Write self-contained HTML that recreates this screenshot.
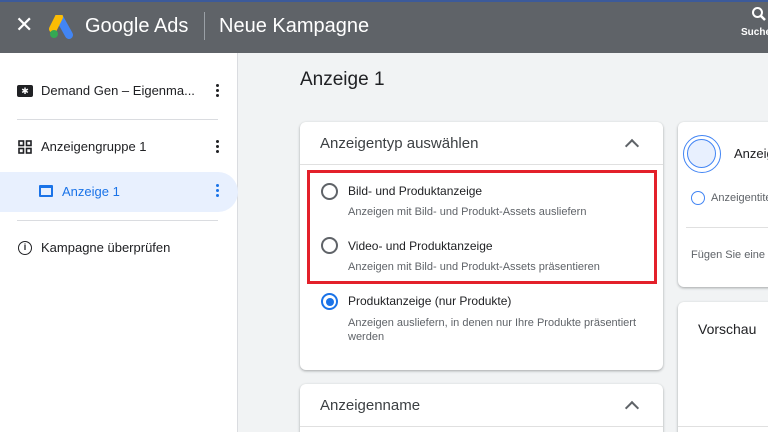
<!DOCTYPE html>
<html><head><meta charset="utf-8"><style>
*{margin:0;padding:0;box-sizing:border-box}
html,body{width:768px;height:432px;overflow:hidden}
body{font-family:"Liberation Sans",sans-serif;background:#f1f3f4;position:relative;color:#202124}
.abs{position:absolute}
.top{left:0;top:0;width:768px;height:53px;background:#5f6368;border-top:2px solid #3c5a9a}
.side{left:0;top:53px;width:238px;height:379px;background:#fff;border-right:1px solid #dadce0}
.t{position:absolute;white-space:nowrap}
.dots{position:absolute;width:3px}
.dots i{display:block;width:3px;height:3px;border-radius:50%;background:#202124;margin-bottom:2px}
.card{position:absolute;background:#fff;border-radius:6px;box-shadow:0 1px 2px rgba(60,64,67,.3),0 1px 3px rgba(60,64,67,.15)}
.radio{position:absolute;width:17px;height:17px;border:2px solid #5f6368;border-radius:50%}
.chev{position:absolute;width:10px;height:10px;border-left:2px solid #5f6368;border-top:2px solid #5f6368;transform:rotate(45deg)}
</style></head><body>
<div class="abs top">
 <div class="t" style="left:15px;top:10px;color:#fff;font-size:22px">✕</div>
 <svg class="abs" style="left:49px;top:13px" width="26" height="24" viewBox="0 0 26 24"><path d="M10 2 L20 20" stroke="#4285f4" stroke-width="8" stroke-linecap="round"/><path d="M10 2 L4 14" stroke="#fbbc04" stroke-width="8" stroke-linecap="round"/><circle cx="5" cy="19" r="4" fill="#34a853"/></svg>
 <div class="t" style="left:85px;top:13px;color:#fff;font-size:20px">Google Ads</div>
 <div class="abs" style="left:204px;top:10px;width:1px;height:28px;background:#9aa0a6"></div>
 <div class="t" style="left:219px;top:13px;color:#fff;font-size:20px">Neue Kampagne</div>
 <svg class="abs" style="left:751px;top:4px" width="16" height="16" viewBox="0 0 16 16"><circle cx="6.5" cy="6.5" r="4.5" stroke="#fff" stroke-width="2" fill="none"/><path d="M10 10 L14 14" stroke="#fff" stroke-width="2.5"/></svg>
 <div class="t" style="left:741px;top:25px;color:#fff;font-size:10px;font-weight:bold">Suche</div>
</div>
<div class="abs side">
 <div class="abs" style="left:17px;top:32px;width:16px;height:12px;background:#202124;border-radius:2px"><div style="color:#fff;font-size:9px;text-align:center;line-height:12px">✱</div></div>
 <div class="t" style="left:41px;top:30px;font-size:13px">Demand Gen – Eigenma...</div>
 <div class="dots" style="left:216px;top:31px"><i></i><i></i><i></i></div>
 <div class="abs" style="left:17px;top:66px;width:201px;height:1px;background:#dadce0"></div>
 <svg class="abs" style="left:18px;top:87px" width="14" height="14" viewBox="0 0 14 14" fill="none" stroke="#202124" stroke-width="1.6"><rect x="1" y="1" width="4.5" height="4.5"/><rect x="8.5" y="1" width="4.5" height="4.5"/><rect x="1" y="8.5" width="4.5" height="4.5"/><rect x="8.5" y="8.5" width="4.5" height="4.5"/></svg>
 <div class="t" style="left:41px;top:86px;font-size:13px">Anzeigengruppe 1</div>
 <div class="dots" style="left:216px;top:87px"><i></i><i></i><i></i></div>
 <div class="abs" style="left:0;top:119px;width:238px;height:40px;background:#e8f0fe;border-radius:0 20px 20px 0"></div>
 <div class="abs" style="left:39px;top:132px;width:14px;height:12px;border:2px solid #1a73e8;border-top-width:3px;border-radius:1px"></div>
 <div class="t" style="left:62px;top:131px;font-size:13px;color:#1a73e8">Anzeige 1</div>
 <div class="dots" style="left:216px;top:131px"><i style="background:#1a73e8"></i><i style="background:#1a73e8"></i><i style="background:#1a73e8"></i></div>
 <div class="abs" style="left:17px;top:167px;width:201px;height:1px;background:#dadce0"></div>
 <div class="abs" style="left:18px;top:188px;width:14px;height:14px;border:1.6px solid #202124;border-radius:50%;font-size:9px;font-weight:bold;text-align:center;line-height:11px">i</div>
 <div class="t" style="left:41px;top:187px;font-size:13px">Kampagne überprüfen</div>
</div>
<div class="t" style="left:300px;top:69px;font-size:19px">Anzeige 1</div>
<div class="card" style="left:300px;top:122px;width:363px;height:248px">
 <div class="t" style="left:20px;top:13px;font-size:15px;color:#3c4043">Anzeigentyp auswählen</div>
 <div class="chev" style="left:327px;top:19px"></div>
 <div class="abs" style="left:0;top:42px;width:363px;height:1px;background:#e0e0e0"></div>
 <div class="abs" style="left:7px;top:48px;width:350px;height:114px;border:3px solid #e3202a"></div>
 <div class="radio" style="left:21px;top:61px"></div>
 <div class="t" style="left:48px;top:62px;font-size:12px">Bild- und Produktanzeige</div>
 <div class="t" style="left:48px;top:84px;font-size:11px;color:#5f6368">Anzeigen mit Bild- und Produkt-Assets ausliefern</div>
 <div class="radio" style="left:21px;top:115px"></div>
 <div class="t" style="left:48px;top:117px;font-size:12px">Video- und Produktanzeige</div>
 <div class="t" style="left:48px;top:139px;font-size:11px;color:#5f6368">Anzeigen mit Bild- und Produkt-Assets präsentieren</div>
 <div class="radio" style="left:21px;top:171px;border-color:#1a73e8"><div style="position:absolute;left:2.5px;top:2.5px;width:8px;height:8px;border-radius:50%;background:#1a73e8"></div></div>
 <div class="t" style="left:48px;top:172px;font-size:12px">Produktanzeige (nur Produkte)</div>
 <div class="t" style="left:48px;top:194px;font-size:11px;color:#5f6368;line-height:14px">Anzeigen ausliefern, in denen nur Ihre Produkte präsentiert<br>werden</div>
</div>
<div class="card" style="left:300px;top:384px;width:363px;height:60px">
 <div class="t" style="left:20px;top:13px;font-size:15px;color:#3c4043">Anzeigenname</div>
 <div class="chev" style="left:327px;top:19px"></div>
 <div class="abs" style="left:0;top:42px;width:363px;height:1px;background:#e0e0e0"></div>
</div>
<div class="card" style="left:678px;top:122px;width:100px;height:165px">
 <div class="abs" style="left:5px;top:13px;width:38px;height:38px;border:1.5px solid #4285f4;border-radius:50%"><div style="position:absolute;left:3px;top:3px;width:29px;height:29px;border:1.5px solid #4285f4;border-radius:50%;background:#e8f0fe"></div></div>
 <div class="t" style="left:56px;top:24px;font-size:13px">Anzeig</div>
 <div class="radio" style="left:13px;top:69px;width:14px;height:14px;border:1.5px solid #4285f4"></div>
 <div class="t" style="left:33px;top:70px;font-size:11px;color:#5f6368">Anzeigentitel</div>
 <div class="abs" style="left:8px;top:105px;width:92px;height:1px;background:#e0e0e0"></div>
 <div class="t" style="left:13px;top:127px;font-size:11px;color:#5f6368">Fügen Sie eine f</div>
</div>
<div class="card" style="left:678px;top:302px;width:100px;height:140px">
 <div class="t" style="left:20px;top:19px;font-size:14px">Vorschau</div>
 <div class="abs" style="left:0;top:124px;width:100px;height:1px;background:#e0e0e0"></div>
</div>
</body></html>
